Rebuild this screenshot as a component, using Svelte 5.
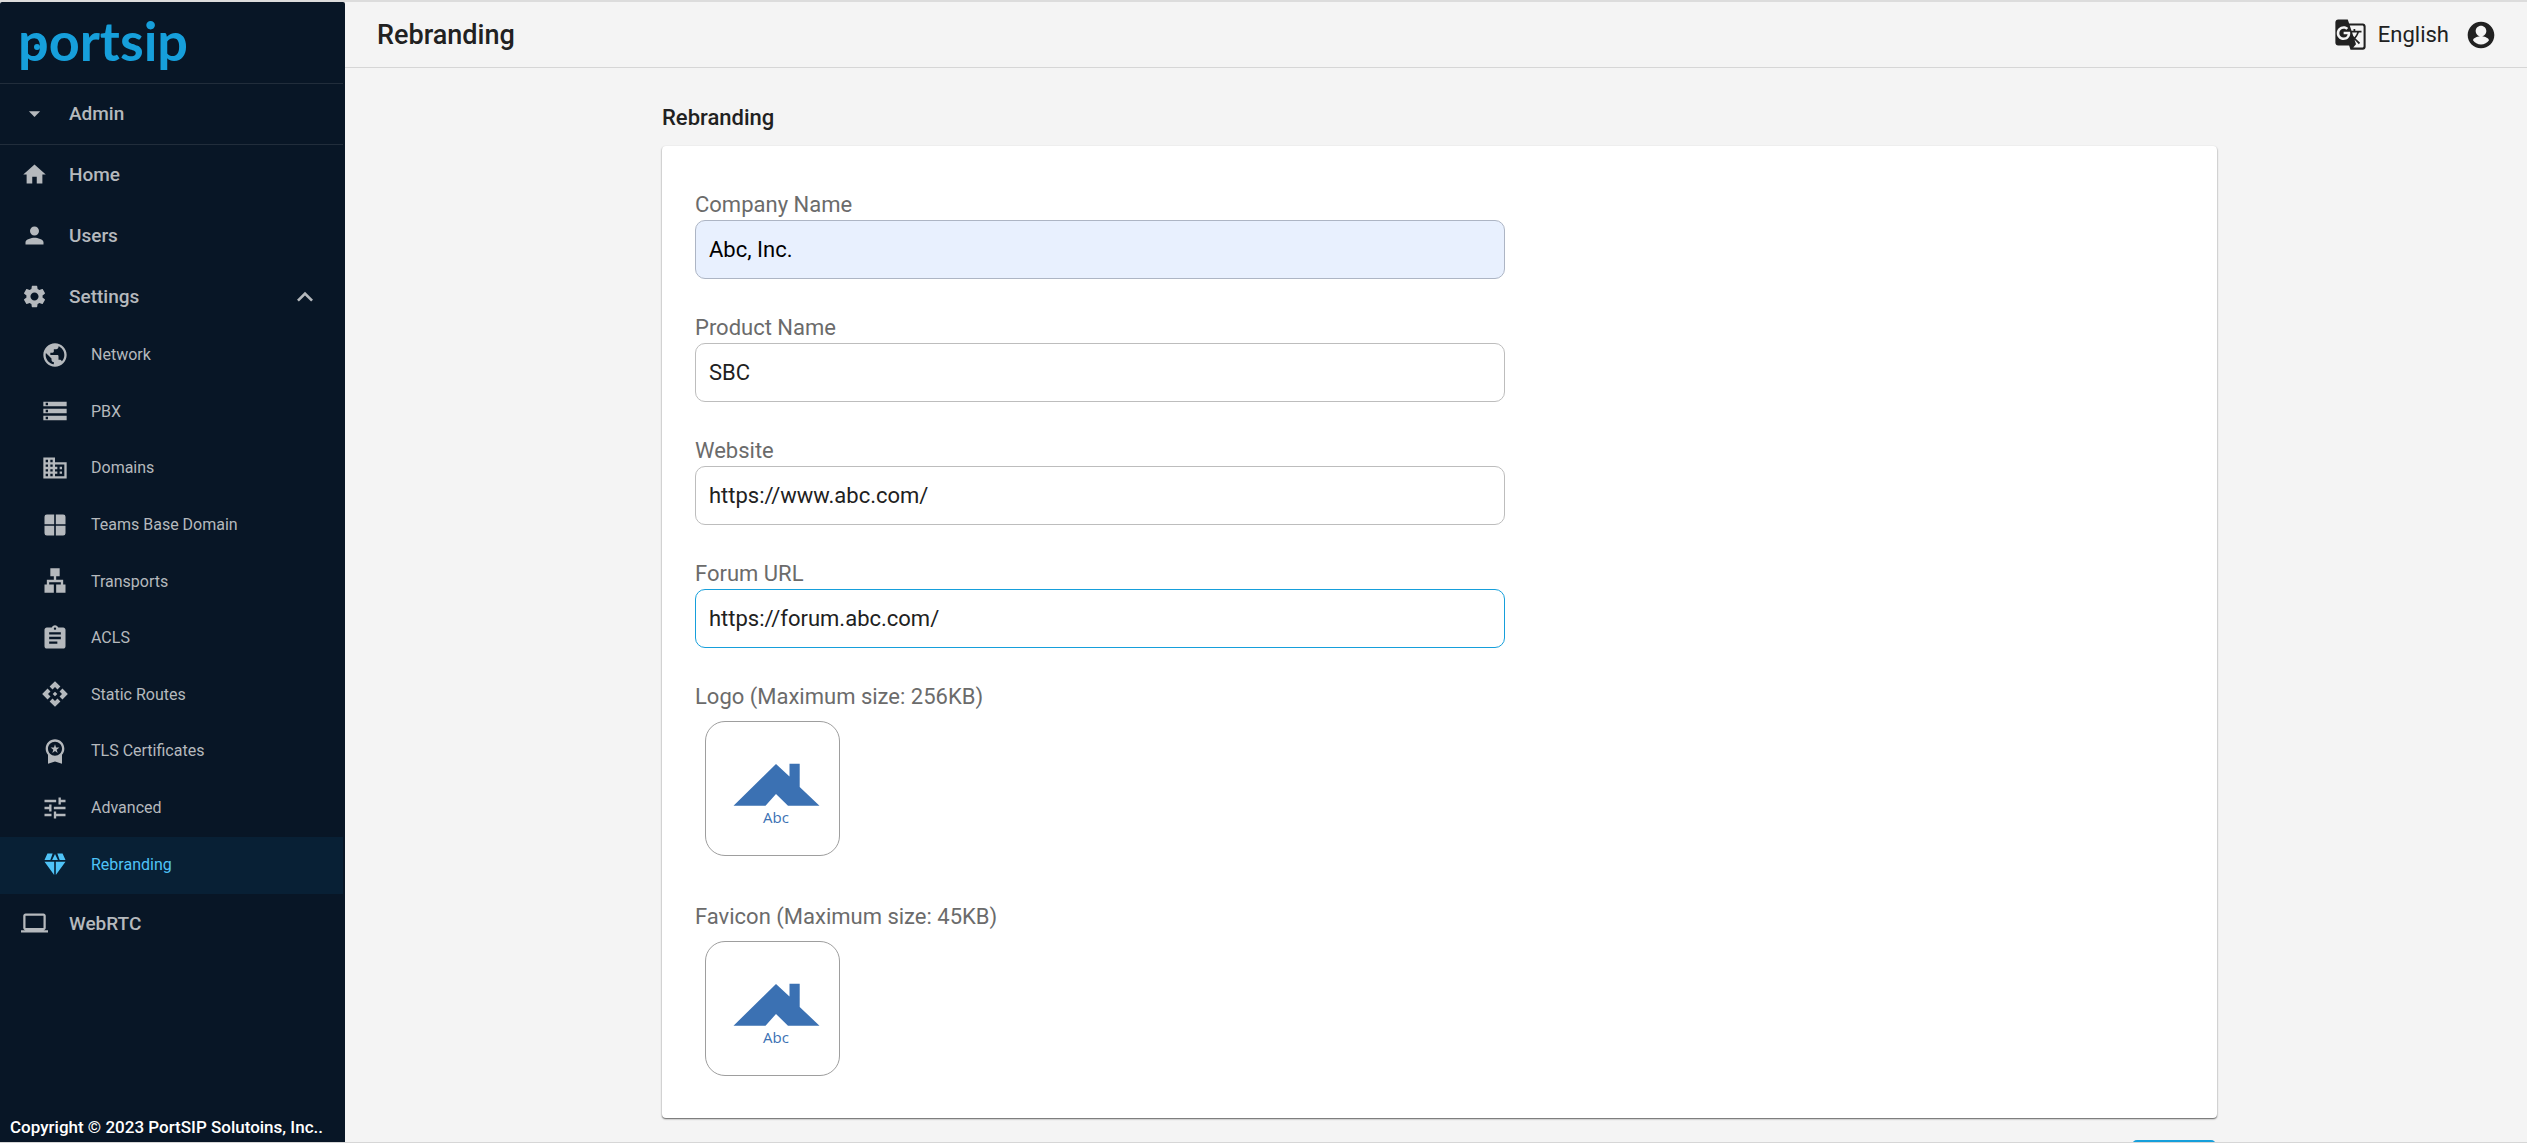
<script>
  const icons = {
    home: 'M10 20v-6h4v6h5v-8h3L12 3 2 12h3v8z',
    user: 'M12 12c2.21 0 4-1.79 4-4s-1.79-4-4-4-4 1.79-4 4 1.79 4 4 4zm0 2c-2.67 0-8 1.34-8 4v2h16v-2c0-2.66-5.33-4-8-4z',
    gear: 'M19.14 12.94c.04-.3.06-.61.06-.94 0-.32-.02-.64-.07-.94l2.03-1.58c.18-.14.23-.41.12-.61l-1.92-3.32c-.12-.22-.37-.29-.59-.22l-2.39.96c-.5-.38-1.03-.7-1.62-.94l-.36-2.54c-.04-.24-.24-.41-.48-.41h-3.84c-.24 0-.43.17-.47.41l-.36 2.54c-.59.24-1.13.57-1.62.94l-2.39-.96c-.22-.08-.47 0-.59.22L2.74 8.87c-.12.21-.08.47.12.61l2.03 1.58c-.05.3-.09.63-.09.94s.02.64.07.94l-2.03 1.58c-.18.14-.23.41-.12.61l1.92 3.32c.12.22.37.29.59.22l2.39-.96c.5.38 1.03.7 1.62.94l.36 2.54c.05.24.24.41.48.41h3.84c.24 0 .44-.17.47-.41l.36-2.54c.59-.24 1.13-.56 1.62-.94l2.39.96c.22.08.47 0 .59-.22l1.92-3.32c.12-.22.07-.47-.12-.61l-2.01-1.58zM12 15.6c-1.98 0-3.6-1.62-3.6-3.6s1.62-3.6 3.6-3.6 3.6 1.62 3.6 3.6-1.62 3.6-3.6 3.6z',
    caret: 'M7 10l5 5 5-5z',
    chevron: 'M12 8l-6 6 1.41 1.41L12 10.83l4.59 4.58L18 14z',
    laptop: 'M20 18c1.1 0 1.99-.9 1.99-2L22 5c0-1.1-.9-2-2-2H4c-1.1 0-2 .9-2 2v11c0 1.1.9 2 2 2H0v2h24v-2h-4zM4 5h16v11H4V5z',
    globe: 'M12 2C6.48 2 2 6.48 2 12s4.48 10 10 10 10-4.48 10-10S17.52 2 12 2zm-1 17.93c-3.95-.49-7-3.85-7-7.93 0-.62.08-1.21.21-1.79L9 15v1c0 1.1.9 2 2 2v1.93zm6.9-2.54c-.26-.81-1-1.39-1.9-1.39h-1v-3c0-.55-.45-1-1-1H8v-2h2c.55 0 1-.45 1-1V7h2c1.1 0 2-.9 2-2v-.41c2.93 1.19 5 4.06 5 7.41 0 2.08-.8 3.97-2.1 5.39z',
    storage: 'M2 20h20v-4H2v4zm2-3h2v2H4v-2zM2 4v4h20V4H2zm4 3H4V5h2v2zm-4 7h20v-4H2v4zm2-3h2v2H4v-2z',
    domain: 'M12 7V3H2v18h20V7H12zM6 19H4v-2h2v2zm0-4H4v-2h2v2zm0-4H4V9h2v2zm0-4H4V5h2v2zm4 12H8v-2h2v2zm0-4H8v-2h2v2zm0-4H8V9h2v2zm0-4H8V5h2v2zm10 12h-8v-2h2v-2h-2v-2h2v-2h-2V9h8v10zm-2-8h-2v2h2v-2zm0 4h-2v2h2v-2z',
    grid: 'M5 3h6.300v8.300H3V5a2 2 0 0 1 2-2zm7.700 0H19a2 2 0 0 1 2 2v6.300h-8.300zM3 12.700h8.300V21H5a2 2 0 0 1-2-2zm9.700 0H21V19a2 2 0 0 1-2 2h-6.300z',
    tree: 'M8 1h8v7h-3v3h6v4h2v7h-8v-7h4v-2H7v2h4v7H3v-7h2v-4h6V8H8z',
    clipboard: 'M19 3h-4.180C14.400 1.840 13.300 1 12 1c-1.300 0-2.400.84-2.820 2H5c-1.100 0-2 .9-2 2v14c0 1.100.9 2 2 2h14c1.100 0 2-.9 2-2V5c0-1.100-.9-2-2-2zm-7 0c.55 0 1 .45 1 1s-.45 1-1 1-1-.45-1-1 .45-1 1-1zm2 14H7v-2h7v2zm3-4H7v-2h10v2zm0-4H7V7h10v2z',
    api: 'M14 12l-2 2-2-2 2-2 2 2zm-2-6l2.120 2.120 2.500-2.500L12 1 7.380 5.620l2.500 2.500L12 6zm-6 6l2.120-2.120-2.500-2.500L1 12l4.620 4.620 2.500-2.500L6 12zm12 0l-2.120 2.120 2.500 2.500L23 12l-4.620-4.620-2.500 2.500L18 12zm-6 6l-2.120-2.120-2.500 2.500L12 23l4.620-4.620-2.500-2.500L12 18z',
    badge: 'M9.680 13.690L12 11.930l2.310 1.760-.88-2.850L15.750 9h-2.840L12 6.190 11.090 9H8.250l2.310 1.840-.88 2.850zM20 10c0-4.420-3.580-8-8-8s-8 3.580-8 8c0 2.030.76 3.870 2 5.280V23l6-2 6 2v-7.720c1.240-1.410 2-3.250 2-5.280zm-8-6c3.310 0 6 2.690 6 6s-2.690 6-6 6-6-2.690-6-6 2.690-6 6-6z',
    tune: 'M3 17v2h6v-2H3zM3 5v2h10V5H3zm10 16v-2h8v-2h-8v-2h-2v6h2zM7 9v2H3v2h4v2h2V9H7zm14 4v-2H11v2h10zm-6-4h2V7h4V5h-4V3h-2v6z',
    diamond: 'M5.500 3L3 8.500h5L10 3zM14 3l2 5.500h5L18.500 3zM12 3.500L9.500 8.500h5zM3 10h8.300v11.500zM12.700 10H21l-8.300 11.500z',
    account: 'M12 2C6.480 2 2 6.480 2 12s4.480 10 10 10 10-4.480 10-10S17.520 2 12 2zm0 3c2.210 0 4 1.790 4 4s-1.790 4-4 4-4-1.790-4-4 1.790-4 4-4zm0 14.200c-2.500 0-4.710-1.280-6-3.220.03-1.990 4-3.080 6-3.080 1.990 0 5.970 1.090 6 3.080-1.290 1.940-3.500 3.220-6 3.220z',
    translate: 'M21 4H11l-1-3H3c-1.100 0-2 .9-2 2v15c0 1.100.9 2 2 2h8l1 3h9c1.100 0 2-.9 2-2V6c0-1.100-.9-2-2-2zM7 16c-2.760 0-5-2.240-5-5s2.240-5 5-5c1.350 0 2.480.5 3.350 1.300L9.030 8.570c-.38-.36-1.040-.78-2.030-.78-1.740 0-3.150 1.440-3.150 3.210S5.260 14.210 7 14.210c2.010 0 2.840-1.440 2.920-2.410H7v-1.710h4.680c.07.31.12.61.12 1.020C11.800 13.970 9.890 16 7 16zm6.170-5.420h3.700c-.43 1.250-1.110 2.430-2.050 3.470-.31-.35-.6-.72-.86-1.100l-.79-2.370zm8.330 9.920c0 .55-.45 1-1 1H14l2-2.500-1.040-3.100 3.100 3.100.92-.92-3.300-3.250.02-.02c1.130-1.250 1.930-2.690 2.400-4.220H20v-1.300h-4.530V8h-1.290v1.290h-1.440L11.460 5.500h9.040c.55 0 1 .45 1 1v14z'
  };

  const settings = [
    ['Network', 'globe'],
    ['PBX', 'storage'],
    ['Domains', 'domain'],
    ['Teams Base Domain', 'grid'],
    ['Transports', 'tree'],
    ['ACLS', 'clipboard'],
    ['Static Routes', 'api'],
    ['TLS Certificates', 'badge'],
    ['Advanced', 'tune'],
    ['Rebranding', 'diamond']
  ];

  let fields = $state([
    { id: 'company', label: 'Company Name', value: 'Abc, Inc.', filled: true },
    { id: 'product', label: 'Product Name', value: 'SBC' },
    { id: 'website', label: 'Website', value: 'https://www.abc.com/' },
    { id: 'forum', label: 'Forum URL', value: 'https://forum.abc.com/', active: true }
  ]);

  const uploads = ['Logo (Maximum size: 256KB)', 'Favicon (Maximum size: 45KB)'];
</script>

{#snippet icon(name)}
  <svg class="icon" viewBox="0 0 24 24" aria-hidden="true"><path d={icons[name]} /></svg>
{/snippet}

<div class="app">
  <aside class="sidebar">
    <a class="brand" href="#home" aria-label="portsip">
      <svg class="wordmark" viewBox="0 0 190 79">
        <text x="2" y="57">portsip</text>
        <circle cx="21" cy="43" r="3" />
      </svg>
    </a>
    <nav>
      <button class="item admin">{@render icon('caret')}<span>Admin</span></button>
      <a class="item" href="#home">{@render icon('home')}<span>Home</span></a>
      <a class="item" href="#users">{@render icon('user')}<span>Users</span></a>
      <button class="item" aria-expanded="true">
        {@render icon('gear')}<span>Settings</span>
        <i class="expand">{@render icon('chevron')}</i>
      </button>
      <div class="sub">
        {#each settings as [label, name]}
          <a class="subitem" class:current={label === 'Rebranding'} href="#{name}">
            {@render icon(name)}<span>{label}</span>
          </a>
        {/each}
      </div>
      <a class="item" href="#webrtc">{@render icon('laptop')}<span>WebRTC</span></a>
    </nav>
    <footer>Copyright © 2023 PortSIP Solutoins, Inc..</footer>
  </aside>

  <div class="main">
    <header>
      <h1>Rebranding</h1>
      <div class="tools">
        <button class="language">{@render icon('translate')}<span>English</span></button>
        <button class="account" aria-label="Account">{@render icon('account')}</button>
      </div>
    </header>
    <main>
      <form class="content">
        <h2>Rebranding</h2>
        <section class="card">
          {#each fields as field}
            <div class="field">
              <label for={field.id}>{field.label}</label>
              <input
                id={field.id}
                type="text"
                class:filled={field.filled}
                class:active={field.active}
                bind:value={field.value}
              />
            </div>
          {/each}
          {#each uploads as label}
            <div class="upload">
              <p>{label}</p>
              <button type="button" aria-label={label}>
                <svg viewBox="0 0 133 133">
                  <path d="M27.500 83.700 70 42 83.500 54.500V41.700H93.700V65L113.500 83.700H82L70 72 59.500 83.700z" />
                  <text x="70" y="101" text-anchor="middle">Abc</text>
                </svg>
              </button>
            </div>
          {/each}
        </section>
        <button class="save" type="button" aria-label="Save"></button>
      </form>
    </main>
  </div>
</div>

<style>
  :global(body) {
    background: #f4f4f4;
    font-family: Roboto, "Liberation Sans", sans-serif;
  }
  .app {
    box-sizing: border-box;
    display: flex;
    height: 100vh;
    border-top: 2px solid #dcdcdc;
    border-bottom: 1px solid #d6d6d6;
    color: #212121;
    overflow: hidden;
  }
  button {
    font: inherit;
    color: inherit;
    background: none;
    border: 0;
    padding: 0;
    cursor: pointer;
  }
  a {
    color: inherit;
    text-decoration: none;
  }
  .icon {
    display: block;
    flex: none;
    width: 27px;
    height: 27px;
    fill: currentColor;
  }
  .sidebar {
    box-sizing: border-box;
    flex: none;
    display: flex;
    flex-direction: column;
    width: 345px;
    padding-right: 2px;
    border-radius: 2px 2px 0 0;
    background: #081626;
    color: #b5b9bd;
  }
  .brand {
    display: block;
    padding: 2px 0 0 16px;
    border-bottom: 1px solid #212d3b;
  }
  .wordmark {
    display: block;
    width: 190px;
    height: 79px;
    fill: #169fdb;
    font: 700 54px Lato, sans-serif;
  }
  .item {
    box-sizing: border-box;
    display: flex;
    align-items: center;
    gap: 21px;
    width: 100%;
    height: 61px;
    padding: 0 22px 2px 21px;
    font-size: 19px;
    font-weight: 500;
    text-align: left;
  }
  .admin {
    border-bottom: 1px solid #212d3b;
  }
  .expand {
    margin-left: auto;
  }
  .expand .icon {
    width: 32px;
    height: 32px;
  }
  .sub {
    display: grid;
    grid-auto-rows: 1fr;
    min-height: 566px;
  }
  .subitem {
    display: flex;
    align-items: center;
    gap: 22px;
    padding: 0 0 3px 41px;
    font-size: 16px;
  }
  .subitem .icon {
    width: 28px;
    height: 28px;
  }
  .current {
    background: #082035;
    color: #4fc3f7;
  }
  footer {
    margin-top: auto;
    padding: 0 0 5px 10px;
    color: #fff;
    font-size: 17px;
    font-weight: 500;
    line-height: 20px;
    white-space: nowrap;
  }
  .main {
    flex: 1;
    min-width: 0;
    display: flex;
    flex-direction: column;
  }
  header {
    display: flex;
    justify-content: space-between;
    align-items: center;
    height: 65px;
    padding: 0 30px 0 32px;
    border-bottom: 1px solid #d6d6d6;
  }
  h1, h2, p {
    margin: 0;
  }
  h1 {
    font-size: 27px;
    font-weight: 500;
    line-height: 32px;
  }
  .tools, .language {
    display: flex;
    align-items: center;
  }
  .tools {
    gap: 16px;
  }
  .language {
    gap: 11px;
    font-size: 22px;
  }
  .language .icon {
    width: 33px;
    height: 33px;
  }
  .account .icon {
    width: 32px;
    height: 32px;
  }
  main {
    flex: 1;
    min-height: 0;
    padding: 36px 20px 0 27px;
    overflow: auto;
    scrollbar-width: none;
  }
  .content {
    display: flex;
    flex-direction: column;
    max-width: 1555px;
    margin: 0 auto;
  }
  h2 {
    margin-bottom: 14px;
    font-size: 22px;
    font-weight: 500;
    line-height: 28px;
  }
  .card {
    padding: 44px 33px 42px;
    border-radius: 4px;
    background: #fff;
    box-shadow: 0 1px 2px rgba(0, 0, 0, 0.45), 0 1px 1px rgba(0, 0, 0, 0.25);
  }
  .field {
    display: flex;
    flex-direction: column;
    max-width: 810px;
    margin-bottom: 34px;
  }
  label, p {
    color: #6b6b6b;
    font-size: 22px;
    line-height: 30px;
  }
  input {
    box-sizing: border-box;
    width: 100%;
    height: 59px;
    padding: 0 13px;
    border: 1px solid #bdbdbd;
    border-radius: 10px;
    background: #fff;
    color: #212121;
    font: 22px Roboto, "Liberation Sans", sans-serif;
    outline: none;
  }
  .filled {
    border-color: #adb5c4;
    background: #e8f0fe;
    color: #000;
  }
  .active {
    border-color: #169fdb;
  }
  .upload button {
    display: block;
    margin: 9px 10px 46px;
    border: 1px solid #9e9e9e;
    border-radius: 20px;
    background: #fff;
  }
  .upload:last-child button {
    margin-bottom: 0;
  }
  .upload svg {
    display: block;
    width: 133px;
    height: 133px;
    fill: #3b71b3;
    font: 400 15px "Open Sans", sans-serif;
  }
  .save {
    align-self: flex-end;
    flex: none;
    width: 84px;
    height: 48px;
    margin: 22px 1px 0 0;
    border-radius: 5px;
    background: #169fdb;
  }
</style>
